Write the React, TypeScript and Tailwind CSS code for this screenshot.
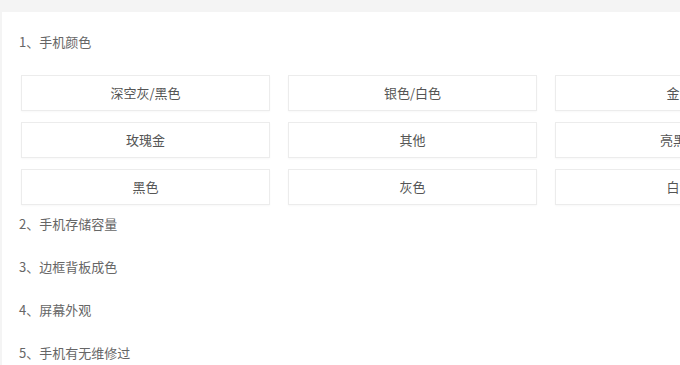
const colors = [
  ["深空灰/黑色", "银色/白色", "金色"],
  ["玫瑰金", "其他", "亮黑色"],
  ["黑色", "灰色", "白色"],
];

const sections = ["2、手机存储容量", "3、边框背板成色", "4、屏幕外观", "5、手机有无维修过"];

export default function App() {
  return (
    <div
      className="h-[365px] w-[680px] overflow-hidden bg-[#f4f4f4] pt-[12px] pl-[2px]"
      style={{ fontFamily: '"Noto Sans CJK SC", "Noto Sans", sans-serif' }}
    >
      <div className="h-full bg-white pl-[17px] pt-[20px]">
        <div className="h-[20px] text-[13px] leading-[20px] text-[#666]">1、手机颜色</div>

        {/* 颜色选项 */}
        <div className="mt-[23px] flex flex-col gap-[11px] pl-[2px]">
          {colors.map((row, i) => (
            <div key={i} className="flex gap-[18px]">
              {row.map((c) => (
                <div
                  key={c}
                  className="flex h-[36px] w-[249px] shrink-0 items-center justify-center border border-[#ececec] text-[13px] text-[#555] shadow-[0_1px_2px_rgba(0,0,0,0.03)]"
                >
                  {c}
                </div>
              ))}
            </div>
          ))}
        </div>

        <div className="mt-[9px] flex flex-col gap-[23px]">
          {sections.map((s) => (
            <div key={s} className="h-[20px] text-[13px] leading-[20px] text-[#666]">
              {s}
            </div>
          ))}
        </div>
      </div>
    </div>
  );
}
